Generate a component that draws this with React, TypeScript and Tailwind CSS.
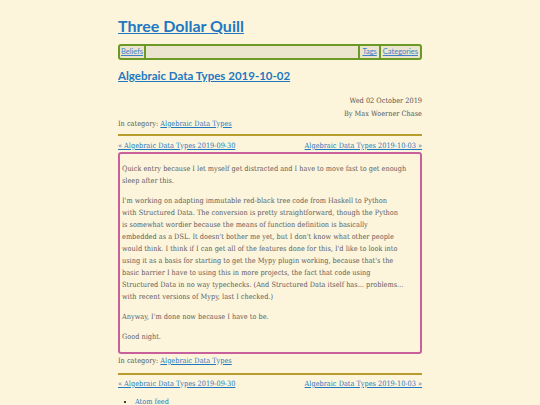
const serif = "font-['DejaVu_Serif_Condensed','DejaVu_Serif',serif]";
const sans = "font-['Lato',sans-serif]";

// line breaks follow the reference rendering
const body = [
  [
    'Quick entry because I let myself get distracted and I have to move fast to get enough',
    'sleep after this.',
  ],
  [
    "I'm working on adapting immutable red-black tree code from Haskell to Python",
    'with Structured Data. The conversion is pretty straightforward, though the Python',
    'is somewhat wordier because the means of function definition is basically',
    "embedded as a DSL. It doesn't bother me yet, but I don't know what other people",
    "would think. I think if I can get all of the features done for this, I'd like to look into",
    "using it as a basis for starting to get the Mypy plugin working, because that's the",
    'basic barrier I have to using this in more projects, the fact that code using',
    'Structured Data in no way typechecks. (And Structured Data itself has... problems...',
    'with recent versions of Mypy, last I checked.)',
  ],
  ["Anyway, I'm done now because I have to be."],
  ['Good night.'],
];

const NavLinks = () => (
  <div className="flex justify-between text-[7.3px] leading-[10px]">
    <a href="#" className="text-[#1f78c1] underline">« Algebraic Data Types 2019-09-30</a>
    <a href="#" className="text-[#1f78c1] underline">Algebraic Data Types 2019-10-03 »</a>
  </div>
);

const Category = () => (
  <p className="text-[7.3px] leading-[10px] text-[#555]">
    In category: <a href="#" className="text-[#1f78c1] underline">Algebraic Data Types</a>
  </p>
);

export default function App() {
  return (
    <div className={`min-h-screen bg-[#fcf5dc] flex justify-center ${serif}`}>
      <div className="w-[304px] pt-[15px]">
        <h1 className={`${sans} font-bold text-[16px] leading-[22px]`}>
          <a href="#" className="text-[#1f78c1] underline">Three Dollar Quill</a>
        </h1>

        <nav className={`mt-[7px] h-[16px] border-2 border-[#6a9a23] rounded-[3px] bg-[#ebe4cf] flex items-stretch ${sans} text-[7.5px]`}>
          <a href="#" className="px-[1px] flex items-center text-[#3d83c8] underline border-r-2 border-[#6a9a23]">Beliefs</a>
          <div className="flex-1" />
          <a href="#" className="px-[2px] flex items-center text-[#3d83c8] underline border-l-2 border-[#6a9a23]">Tags</a>
          <a href="#" className="px-[2px] flex items-center text-[#3d83c8] underline border-l-2 border-[#6a9a23]">Categories</a>
        </nav>

        <h2 className={`mt-[7px] ${sans} font-bold text-[11.5px] leading-[18px]`}>
          <a href="#" className="text-[#1f78c1] underline">Algebraic Data Types 2019-10-02</a>
        </h2>

        <div className="mt-[9px] text-right text-[7.3px] leading-[13px] text-[#555]">
          <p>Wed 02 October 2019</p>
          <p>By Max Woerner Chase</p>
        </div>
        <div className="-mt-[1px]">
          <Category />
        </div>

        <hr className="mt-[5px] border-0 border-t-2 border-[#b89c2e]" />

        <div className="mt-[5px]">
          <NavLinks />
        </div>

        <article className="mt-[1px] border-2 border-[#c8609b] rounded-[3px] px-[2px] pt-[9px] pb-[9px] text-[7.3px] leading-[12px] text-[#5c5c5c] flex flex-col gap-[8px]">
          {body.map((para, i) => (
            <p key={i}>
              {para.map((line, j) => (
                <span key={j} className="block whitespace-nowrap">{line}</span>
              ))}
            </p>
          ))}
        </article>

        <div className="mt-[2px]">
          <Category />
        </div>

        <hr className="mt-[7px] border-0 border-t-2 border-[#b89c2e]" />

        <div className="mt-[4px]">
          <NavLinks />
        </div>

        <ul className="mt-[7px] list-disc pl-[17px] text-[7.3px] leading-[12px]">
          <li><a href="#" className="text-[#1f78c1] underline">Atom feed</a></li>
        </ul>
      </div>
    </div>
  );
}
